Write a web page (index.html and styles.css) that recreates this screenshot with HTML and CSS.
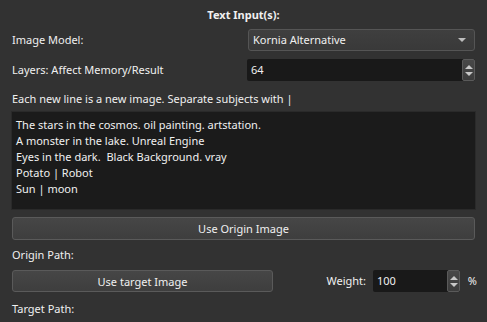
FILE: index.html
```html
<!DOCTYPE html>
<html lang="en">
<head>
    <meta charset="UTF-8">
    <meta name="viewport" content="width=device-width, initial-scale=1.0">
    <title>Text Input(s)</title>
    <link rel="stylesheet" href="styles.css">
</head>
<body>
    <div class="panel">
        <h1 class="title">Text Input(s):</h1>

        <div class="form-row">
            <label class="label">Image Model:</label>
            <div class="combo">
                <span class="combo-text">Kornia Alternative</span>
                <span class="combo-arrow"></span>
            </div>
        </div>

        <div class="form-row row-layers">
            <label class="label">Layers: Affect Memory/Result</label>
            <div class="spin">
                <span class="spin-value">64</span>
                <span class="spin-buttons">
                    <span class="arrow-up"></span>
                    <span class="arrow-down"></span>
                </span>
            </div>
        </div>

        <p class="hint">Each new line is a new image. Separate subjects with |</p>

        <div class="text-box">
            <div>The stars in the cosmos. oil painting. artstation.</div>
            <div>A monster in the lake. Unreal Engine</div>
            <div>Eyes in the dark.&nbsp; Black Background. vray</div>
            <div>Potato | Robot</div>
            <div>Sun | moon</div>
        </div>

        <button class="btn btn-wide">Use Origin Image</button>

        <p class="path-label">Origin Path:</p>

        <div class="target-row">
            <button class="btn btn-target">Use target Image</button>
            <span class="weight-label">Weight:</span>
            <div class="spin spin-small">
                <span class="spin-value">100</span>
                <span class="spin-buttons">
                    <span class="arrow-up"></span>
                    <span class="arrow-down"></span>
                </span>
            </div>
            <span class="percent">%</span>
        </div>

        <p class="path-label path-target">Target Path:</p>
    </div>
</body>
</html>
```

FILE: styles.css
```css
* {
    margin: 0;
    padding: 0;
    box-sizing: border-box;
}
body {
    background-color: #323232;
    color: #f0f0f0;
    font-family: 'Noto Sans', 'Open Sans', sans-serif;
    font-size: 11px;
    line-height: 16px;
}
.panel {
    padding: 0 12px;
    display: flex;
    flex-direction: column;
}
.title {
    font-size: 11px;
    font-weight: bold;
    text-align: center;
    padding-top: 7px;
    line-height: 16px;
    height: 23px;
}
.form-row {
    display: grid;
    grid-template-columns: 236px 1fr;
    align-items: center;
    height: 22px;
    margin-top: 6px;
}
.row-layers {
    margin-top: 8px;
}
.row-layers .spin {
    margin-left: -1px;
}
.combo {
    height: 22px;
    border: 1px solid #555;
    border-radius: 3px;
    background: linear-gradient(#3f3f3f, #393939);
    display: flex;
    align-items: center;
    justify-content: space-between;
    padding: 0 8px 0 4px;
}
.combo-arrow {
    width: 0;
    height: 0;
    border-left: 4px solid transparent;
    border-right: 4px solid transparent;
    border-top: 4px solid #bdbdbd;
}
.spin {
    height: 22px;
    background-color: #191919;
    border-radius: 2px;
    display: flex;
    align-items: stretch;
    justify-content: space-between;
    padding-left: 4px;
}
.spin-value {
    align-self: center;
}
.spin-buttons {
    width: 13px;
    background: linear-gradient(#484848, #3c3c3c);
    border: 1px solid #5a5a5a;
    border-radius: 2px;
    display: flex;
    flex-direction: column;
    align-items: center;
    justify-content: center;
    gap: 3px;
}
.arrow-up {
    width: 0;
    height: 0;
    border-left: 4px solid transparent;
    border-right: 4px solid transparent;
    border-bottom: 4px solid #c8c8c8;
}
.arrow-down {
    width: 0;
    height: 0;
    border-left: 4px solid transparent;
    border-right: 4px solid transparent;
    border-top: 4px solid #c8c8c8;
}
.hint {
    margin-top: 10px;
    height: 16px;
}
.text-box {
    margin: 4px -1px 0;
    height: 99px;
    background-color: #1b1b1b;
    border: 1px solid #2a2a2a;
    padding: 5px 4px;
}
.btn {
    font-family: inherit;
    font-size: 11px;
    color: #f0f0f0;
    height: 23px;
    border: 1px solid #5a5a5a;
    border-radius: 3px;
    background: linear-gradient(#464646, #3e3e3e);
}
.btn-wide {
    margin-top: 7px;
    width: 100%;
}
.path-label {
    margin-top: 7px;
    height: 16px;
}
.target-row {
    margin-top: 7px;
    height: 22px;
    display: flex;
    align-items: center;
}
.btn-target {
    width: 261px;
    height: 22px;
}
.weight-label {
    margin-left: auto;
    margin-right: 7px;
}
.spin-small {
    width: 87px;
}
.percent {
    width: 17px;
    text-align: right;
    margin-right: -2px;
}
.path-target {
    margin-top: 9px;
}
```
